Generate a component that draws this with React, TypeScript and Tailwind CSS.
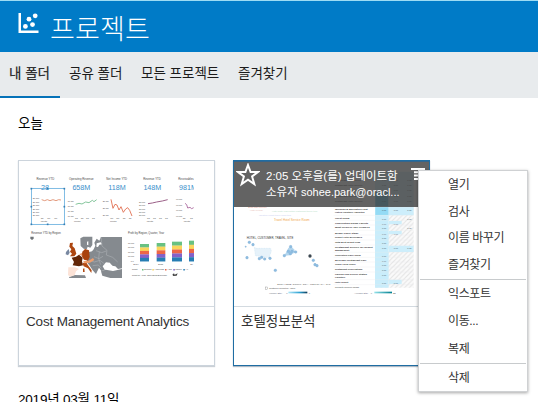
import React from "react";

const tabs = [
  { label: "내 폴더", active: true, cls: "w-[60px] pl-[9px] font-medium text-[#333]" },
  { label: "공유 폴더", active: false, cls: "w-[73px] pl-[9px] text-[#1b1b1b]" },
  { label: "모든 프로젝트", active: false, cls: "w-[96px] pl-[8px] text-[#1b1b1b]" },
  { label: "즐겨찾기", active: false, cls: "pl-[9px] text-[#1b1b1b]" },
];

const kpis = [
  { x: 106, title: "Revenue YTD", value: "28", vx: 105 },
  { x: 214, title: "Operating Revenue", value: "658M", vx: 214 },
  { x: 320, title: "Net Income YTD", value: "118M", vx: 321 },
  { x: 426, title: "Revenue YTD", value: "148M", vx: 427 },
  { x: 528, title: "Receivables", value: "981M", vx: 534 },
];

const barColors = ["#68c182", "#fad55c", "#ed6647", "#8561c8", "#267db3"];
const bars = [
  { x: 390, w: 27, y: 72 },
  { x: 440, w: 26, y: 69 },
  { x: 486, w: 30, y: 65 },
  { x: 537, w: 15, y: 62 },
];

function CostThumbnail() {
  return (
    <svg className="block h-[145px] w-[195px]" viewBox="19 161 195 145" fontFamily="Liberation Sans, Arial, sans-serif">
      <defs>
        <clipPath id="kpiArea"><rect x="30" y="0" width="522" height="150" /></clipPath>
      </defs>
      <g transform="translate(10 150) scale(.33333)">
        <g clipPath="url(#kpiArea)">
          {kpis.map((k, i) => (
            <g key={i} textAnchor="middle">
              <text x={k.x} y="89" fontSize="8.5" fill="#444">{k.title}</text>
              <text x={k.vx} y="121" fontSize="21.5" fill="#3b8fcb">{k.value}</text>
            </g>
          ))}
        </g>
        <g fontSize="6.5" fill="#444">
          {[147, 158, 168, 178, 188, 198].map((y) => <text key={y} x="68" y={y + 1}>30,000</text>)}
          {[156, 171, 186, 201].map((y) => <text key={y} x="173" y={y}>60.0M</text>)}
          {[157, 178, 198].map((y) => <text key={y} x="278" y={y}>20.0M</text>)}
          {[158, 168, 179, 189, 199].map((y) => <text key={y} x="387" y={y}>30.0M</text>)}
          {[151, 167, 184, 200].map((y) => <text key={y} x="498" y={y}>90.0M</text>)}
          {[92, 112, 133].map((x) => <text key={x} x={x} y="208">Q1</text>)}
          {[195, 212, 228, 246].map((x) => <text key={x} x={x} y="208">Q1</text>)}
          {[301, 319, 338, 356].map((x) => <text key={x} x={x} y="208">Q1</text>)}
          {[411, 429, 447, 465].map((x) => <text key={x} x={x} y="208">Q1</text>)}
          {[518, 540].map((x) => <text key={x} x={x} y="208">Q1</text>)}
        </g>
        <g fill="none" strokeWidth="2.6">
          <path d="M95 149L104 152L112 149L120 152L129 149L138 152L146 149L153 150" stroke="#df8b6b" />
          <path d="M197 163L207 160L216 162L227 156L237 158L247 151L252 155L260 149" stroke="#72bc8c" />
          <path d="M303 148L309 175L315 163L321 165L327 180L333 170L340 187L347 177L353 173L359 181L366 198" stroke="#e06a4a" />
          <path d="M414 161L427 159L440 156L457 153L473 149" stroke="#8b4775" />
          <path d="M525 160L530 164L533 174L540 172L545 176L551 173" stroke="#a8649b" />
        </g>
        <path d="M64.5 115.5H163.5V223.5H64.5Z" stroke="#6db1e0" strokeWidth="2.6" fill="none" />
        <g fill="#357fb4">
          {[[64, 116], [113, 116], [163, 116], [64, 170], [163, 170], [64, 223], [113, 223], [163, 223]].map(([x, y]) => (
            <rect key={`${x}-${y}`} x={x - 2.5} y={y - 2.5} width="5" height="5" />
          ))}
        </g>
      </g>
      <g transform="translate(10 220) scale(.33333)">
        <g fontSize="7" fill="#555">
          <text x="92" y="7">Month</text>
          <text x="192" y="7">Month</text>
          <text x="300" y="7">Month</text>
          <text x="410" y="7">Month</text>
          <text x="521" y="7">Month</text>
          <text x="64" y="43" fontSize="8" fill="#444">Revenue YTD by Region</text>
          <text x="354" y="43" fontSize="8" fill="#444">Profit by Region, Quarter, Year</text>
        </g>
        <path d="M61 50H71V56L66 60L61 56Z" fill="#717579" />
        <g fill="#858a8f">
          <path d="M211 55L220 50H247V75L241 83L233 80L230 88L221 86L212 78Z" />
          <path d="M251 88L256 77L253 68L260 56L268 62L273 51H336V145L324 147L316 139L305 137L300 128L288 127L278 139L285 151L274 153L267 143L258 162L248 151L238 136L230 126L235 97L246 94Z" />
          <path d="M178 171L193 165L225 166L228 174H177Z" />
          <path d="M273 154L287 149L309 153L336 147V174H301L277 167Z" />
        </g>
        <path d="M168 96L176 87L179 98L174 106L167 103Z" fill="#7888a1" />
        <g fill="#fff">
          <path d="M231 65L235 64L235 76L231 74Z M260 70L272 67L276 73L268 74L264 81L259 80Z" />
          <path d="M281 141L284 134L294 137L303 133L314 144L306 149L287 147Z" />
        </g>
        <path d="M273 51L276 78L291 91L289 105L308 112L323 126M258 92L275 98L289 93M252 110L267 116L279 109M239 121L253 126L270 121L284 132M248 137L265 135L274 145M268 95L266 116L272 134" fill="none" stroke="#b5b9bd" strokeWidth="1.5" />
        <path d="M180 69L189 68L187 78L194 85L199 101L193 109L180 109L186 101L180 95L184 88L178 80Z" fill="#ad4610" />
        <path d="M185 113L198 110L207 104L218 113L216 124L219 136L207 139L188 136L192 126Z" fill="#632607" />
        <path d="M217 95L225 87L237 91L239 111L234 122L222 119L215 108Z" fill="#a9430e" />
        <path d="M217 130L228 126L233 134L245 151L244 159L234 145L221 139Z M219 146L223 145L224 156L219 156Z" fill="#b34c16" />
        <path d="M175 142L195 142L207 147L198 154L194 166L180 170L174 165Z" fill="#fce3d7" />
        <path d="M220 123L236 122L249 114L253 120L240 128L222 130Z M207 103L216 99L217 108Z" fill="#ed9e6e" />
        {bars.map((b) => barColors.map((c, i) => {
          const h = (124 - b.y) / 5;
          return <rect key={`${b.x}-${i}`} x={b.x} y={b.y + h * i} width={b.w} height={h + 0.4} fill={c} />;
        }))}
        <g fontSize="7" fill="#444">
          {[72, 85, 98, 112].map((y) => <text key={y} x="354" y={y} fontSize="6.5">80.0M</text>)}
          <text x="362" y="125" fontSize="6.5">0.0</text>
          <text x="370" y="134">2014</text>
          <text x="444" y="134">2015</text>
          <text x="541" y="134">20</text>
          <text x="366" y="151">Profit</text>
          <text x="403" y="151">Europe</text>
          <text x="433" y="151">Americas</text>
          <text x="472" y="151">Asia</text>
          <text x="496" y="151">Japan</text>
          <text x="526" y="151">All</text>
          <text x="366" y="169">Profit by Year, Operating Expense</text>
          <path d="M487 164L492 160L494 164L503 160L500 167L490 168Z" />
        </g>
        {[396, 427, 465, 490, 520].map((x, i) => <rect key={x} x={x} y="147" width="4.5" height="4.5" fill={barColors[i]} />)}
      </g>
    </svg>
  );
}

const hotelRows = [
  { y: 179, w: 98, t: "Wellness & Specialties Host", second: "Hotels Furniture Amenities" },
  { y: 204, w: 43, t: "Guest Room" },
  { y: 219, w: 100, t: "Convention Room Facility" },
  { y: 233, w: 104, t: "Most Reserve The Leisures" },
  { y: 249, w: 70, t: "Bridge Travel Stage" },
  { y: 263, w: 81, t: "Resort Hotel Beverages" },
  { y: 278, w: 76, t: "Total Best Resort Club" },
  { y: 293, w: 113, t: "Restaurant Service for Resort", second: "Management" },
  { y: 315, w: 77, t: "Convention Travel Room" },
  { y: 330, w: 94, t: "Beverage Restaurant Cafe" },
  { y: 344, w: 62, t: "Traffic Local Travel" },
  { y: 359, w: 82, t: "Restaurant Reservations" },
  { y: 374, w: 96, t: "Parking Club Service Station", second: "Furniture" },
  { y: 397, w: 40, t: "Hotel Resort" },
  { y: 412, w: 72, t: "Security Service Room" },
];

const mapDots = [
  [73, 67], [84, 74], [62, 80], [66, 113], [103, 116], [119, 117], [135, 115], [110, 112], [151, 151],
  [178, 107], [197, 80], [190, 94], [201, 94], [212, 96], [196, 101], [265, 121], [270, 134], [276, 137],
];

function HotelThumbnail() {
  return (
    <svg className="block h-[145px] w-[195px]" viewBox="234 161 195 145" fontFamily="Liberation Sans, Arial, sans-serif">
      <defs>
        <pattern id="hatch" width="14" height="14" patternUnits="userSpaceOnUse">
          <rect width="14" height="14" fill="#fafafa" />
          <path d="M0 14L14 0M-3 3L3 -3M11 17L17 11" stroke="#e4e4e4" strokeWidth="3" />
        </pattern>
        <linearGradient id="blueScale"><stop stopColor="#b2e7f8" /><stop offset=".6" stopColor="#2ba1d2" /><stop offset="1" stopColor="#123b58" /></linearGradient>
        <linearGradient id="tealScale"><stop stopColor="#94e2e9" /><stop offset="1" stopColor="#007f90" /></linearGradient>
        <clipPath id="matrixArea"><rect x="325" y="30" width="241" height="383" /></clipPath>
      </defs>
      <g transform="translate(225 150) scale(.33333)">
        <g fontSize="7">
          <text x="70" y="175" fill="#df9a8c">Best hotel service</text>
          <text x="75" y="184" fill="#e6b5ad">Hotel review</text>
          <text x="141" y="187" fill="#b3dcc5">Hotel suite reservation restaurant travel tour</text>
          <text x="101" y="199" fill="#c9cdf0">Vacation resort travel room tour</text>
          <text x="147" y="213" fill="#f1a64b" fontSize="9">Travel Hotel Service Room</text>
          <text x="65" y="268" fill="#333" fontSize="8.5" textLength="140">HOTEL, CUSTOMER, TRAVEL, SITE</text>
        </g>
        <path d="M88 292L95 295L137 295L139 304L132 323L91 317Z" fill="#e6f2fa" stroke="#b6d7ed" strokeDasharray="3 2" />
        <path d="M178 317L190 294L198 289L207 298L211 307L195 316Z" fill="#b3d6ee" />
        <g fill="#8dbde1">
          {mapDots.map(([x, y]) => <circle key={`${x}-${y}`} cx={x} cy={y + 210} r={x === 62 ? 2 : 4} stroke="#7babd0" strokeWidth="1" />)}
        </g>
        <circle cx="255" cy="318" r="5" fill="#3c4751" />
        <g fontSize="7.5" fill="#555">
          <text x="157" y="405" textLength="159">ESRI HERE Garmin, NGA, METI/NASA, GIS</text>
          <rect x="121" y="411" width="6" height="8" fill="none" stroke="#777" />
          <text x="132" y="418" textLength="79">Customer Resort by, Value</text>
        </g>
        <g clipPath="url(#matrixArea)">
          <rect x="450" y="82" width="118" height="340" fill="url(#hatch)" />
          <rect x="450" y="65" width="41" height="360" fill="#c9edfb" />
          <rect x="451" y="125" width="39" height="45" fill="#3fb6dd" />
          <path d="M492 65H568V170H492Z" fill="#c8e9f6" />
          <path d="M450 169H568V196H450Z M492 213H530V223H492Z M492 243H530V253H492Z M492 287H568V306H492Z M492 389H530V402H492Z" fill="#cdeefb" />
          <rect x="451" y="170" width="39" height="25" fill="#94dbf5" />
          {hotelRows.map((r, i) => (
            <g key={r.y}>
              <path d={`M325 ${r.y - 8}H568`} stroke="#e8ebed" strokeWidth="1" />
              <text x="330" y={r.y + 2.5} fontSize="7" fontWeight="700" fill="#333" textLength={r.w} lengthAdjust="spacingAndGlyphs">{r.t}</text>
              {r.second && <text x="330" y={r.y + 11.5} fontSize="7" fontWeight="700" fill="#333">{r.second}</text>}
              <text x="471" y={r.y + 5} fontSize="6.5" fill="#456">0.00</text>
              {[0, 2, 4, 7, 13].includes(i) && <text x="506" y={r.y + 5} fontSize="6.5" fill="#456">0.00</text>}
              {[0, 1, 3, 7].includes(i) && <text x="547" y={r.y + 5} fontSize="6.5" fill="#456">0.00</text>}
            </g>
          ))}
          {[92, 108, 124, 140, 156].map((y) => (
            <g key={y} fill="#222">
              <text x="330" y={y} fontSize="7" fontWeight="700">Restaurant Hotel Service</text>
              <text x="471" y={y} fontSize="6.5">0.00</text>
              <text x="506" y={y} fontSize="6.5">0.00</text>
              <text x="547" y={y} fontSize="6.5">0.00</text>
            </g>
          ))}
        </g>
        <g fontSize="7" fill="#667">
          <text x="132" y="431">Volume Stay</text>
          <text x="184" y="431">0</text>
          <rect x="190" y="425" width="57" height="5" fill="url(#blueScale)" />
          <text x="251" y="431">6</text>
          <text x="388" y="431">Average Stay</text>
          <text x="437" y="431">0</text>
          <rect x="448" y="425" width="53" height="5" fill="url(#tealScale)" />
          <text x="504" y="431" fill="#333">88</text>
        </g>
      </g>
    </svg>
  );
}

function MenuItem({ children, className = "h-[27px]" }: { children: React.ReactNode; className?: string }) {
  return <button className={`flex w-full items-center pl-[29px] text-left text-[12px] leading-none tracking-[-0.4px] text-[#333] ${className}`}>{children}</button>;
}

export default function App() {
  return (
    <div className="relative h-[402px] w-[538px] overflow-hidden bg-white font-['Liberation_Sans','Noto_Sans_CJK_KR',sans-serif]">
      <header className="flex h-[52px] border-t border-[#9ddcf4] bg-[#007bc7] pl-[18px] text-white">
        <svg className="mt-[11px] h-[22px] w-[22px] shrink-0" viewBox="0 0 22 22" fill="currentColor">
          <path d="M.5 1H3V18.5H20.5V21H.5Z" />
          <circle cx="11" cy="7.2" r="2.4" /><circle cx="17.2" cy="3.8" r="2.4" />
          <circle cx="7.4" cy="14.4" r="2.4" /><circle cx="14.5" cy="12.6" r="2.4" />
        </svg>
        <h1 className="ml-[10px] mt-[9px] whitespace-nowrap font-['Noto_Sans_CJK_KR',sans-serif] text-[27px] font-light leading-[36px] tracking-[0.2px]">프로젝트</h1>
      </header>
      <nav className="flex h-[46px] bg-[#e8ebed]">
        {tabs.map((t) => (
          <div key={t.label} className={`flex items-center whitespace-nowrap border-b-2 text-[13.5px] leading-none ${t.active ? "border-[#0572b8]" : "border-transparent"} ${t.cls}`}>
            {t.label}
          </div>
        ))}
      </nav>
      <main className="pl-[18px]">
        <h2 className="flex h-[62px] items-start pt-[17px] text-[13.5px] leading-[18px] text-black">오늘</h2>
        <div className="flex gap-[18px]">
          <article className="h-[206px] w-[197px] border border-[#ccd4dc] bg-white shadow-[0_1px_1px_rgba(80,100,120,.3)]">
            <CostThumbnail />
            <div className="border-t border-[#d3dae0] pl-[7px] pt-[6px] text-[13.5px] leading-[18px] tracking-[-0.17px] text-[#333]">
              <span className="whitespace-nowrap">Cost Management Analytics</span>
            </div>
          </article>
          <article className="relative h-[206px] w-[197px] border border-[#1f6da3] bg-white shadow-[0_1px_1px_rgba(50,80,110,.4)]">
            <HotelThumbnail />
            <div className="border-t border-[#d3dae0] pl-[7px] pt-[6px] text-[13.5px] leading-[18px] text-[#333]">호텔정보분석</div>
            <div className="absolute inset-x-0 top-0 flex h-[46px] border-t border-[#35658c] bg-[#484848]/85 text-white">
              <svg className="ml-[2px] mt-[1px] h-[24px] w-[24px] shrink-0" viewBox="0 0 24 24" fill="none" stroke="currentColor" strokeWidth="2">
                <path d="M12 2L14.6 9H22L16.1 13.5L18.3 21L12 16.6L5.7 21L7.9 13.5L2 9H9.4Z" />
              </svg>
              <div className="ml-[6px] w-[138px] whitespace-nowrap pt-[6px] leading-[16px]">
                <div className="text-[11.5px] leading-[16px]">2:05 오후을(를) 업데이트함</div>
                <div className="text-[11.5px] leading-[16px]">소유자 <span className="text-[11px]">sohee.park@oracl...</span></div>
              </div>
              <svg className="ml-[6px] mt-[6px] h-[12px] w-[16px]" viewBox="0 0 16 12" fill="currentColor">
                <path d="M1 0H15V2H1ZM4 3.3H15V5.3H4ZM4 6.6H15V8.6H4ZM4 10H15V12H4Z" />
              </svg>
            </div>
          </article>
        </div>
        <h2 className="mt-[25px] whitespace-nowrap text-[13.5px] leading-[18px] tracking-[-0.2px] text-black">2019년 03월 11일</h2>
      </main>
      <div className="absolute left-[418px] top-[170px] h-[222px] w-[110px] border border-[#cfd1d3] bg-white shadow-[0_1px_3px_rgba(0,0,0,.35)]">
        <MenuItem>열기</MenuItem>
        <MenuItem>검사</MenuItem>
        <MenuItem className="h-[26px]">이름 바꾸기</MenuItem>
        <MenuItem className="h-[28px]">즐겨찾기</MenuItem>
        <div className="mx-[1px] border-t border-[#c8cbcd]" />
        <MenuItem>익스포트</MenuItem>
        <MenuItem className="h-[28px]">이동...</MenuItem>
        <MenuItem className="h-[28px]">복제</MenuItem>
        <div className="mx-[1px] border-t border-[#c8cbcd]" />
        <MenuItem>삭제</MenuItem>
      </div>
    </div>
  );
}
